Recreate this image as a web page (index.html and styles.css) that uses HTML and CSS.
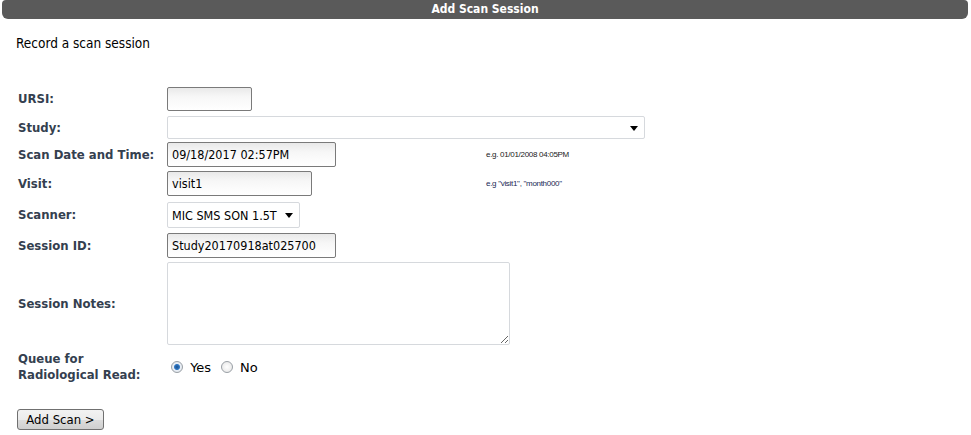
FILE: index.html
```html
<!DOCTYPE html>
<html lang="en">
<head>
    <meta charset="UTF-8">
    <title>Add Scan Session</title>
    <link rel="stylesheet" href="styles.css">
</head>
<body>
    <div class="title-bar">Add Scan Session</div>
    <p class="intro">Record a scan session</p>

    <form class="scan-form">
        <table class="form-table">
            <tr class="ursi-row">
                <td class="label">URSI:</td>
                <td colspan="2"><input type="text" class="field ursi"></td>
            </tr>
            <tr class="study-row">
                <td class="label">Study:</td>
                <td colspan="2">
                    <span class="select-wrap study">
                        <select class="plain-select"><option></option></select>
                    </span>
                </td>
            </tr>
            <tr>
                <td class="label">Scan Date and Time:</td>
                <td class="input-cell"><input type="text" class="field date" value="09/18/2017 02:57PM"></td>
                <td class="hint">e.g. 01/01/2008 04:05PM</td>
            </tr>
            <tr>
                <td class="label">Visit:</td>
                <td class="input-cell"><input type="text" class="field visit" value="visit1"></td>
                <td class="hint blue">e.g "visit1", "month000"</td>
            </tr>
            <tr class="scanner-row">
                <td class="label">Scanner:</td>
                <td colspan="2">
                    <span class="select-wrap scanner">
                        <select class="plain-select"><option>MIC SMS SON 1.5T</option></select>
                    </span>
                </td>
            </tr>
            <tr>
                <td class="label">Session ID:</td>
                <td colspan="2"><input type="text" class="field session" value="Study20170918at025700"></td>
            </tr>
            <tr>
                <td class="label">Session Notes:</td>
                <td colspan="2"><textarea class="notes"></textarea></td>
            </tr>
            <tr class="queue-row">
                <td class="label">Queue for<br>Radiological Read:</td>
                <td colspan="2">
                    <label class="radio"><input type="radio" name="queue" checked> Yes</label>
                    <label class="radio"><input type="radio" name="queue"> No</label>
                </td>
            </tr>
        </table>

        <button type="button" class="add-btn">Add Scan &gt;</button>
    </form>
</body>
</html>
```

FILE: styles.css
```css
body {
    margin: 0;
    padding: 0;
    background: #fff;
    font-family: "DejaVu Sans Condensed", "DejaVu Sans", sans-serif;
    font-size: 13px;
    color: #000;
}
.title-bar {
    margin: 0 3px 0 2px;
    height: 19px;
    line-height: 19px;
    background-color: #5a5a5a;
    border-radius: 4px 4px 6px 6px;
    color: #fff;
    font-weight: bold;
    font-size: 12px;
    text-align: center;
}
.intro {
    margin: 16px 0 0 16px;
    font-size: 13.5px;
}
.scan-form {
    margin: 34px 0 0 16px;
}
.form-table {
    border-collapse: collapse;
}
.form-table td {
    padding: 2px 2px;
    vertical-align: middle;
}
.form-table .ursi-row td {
    padding-bottom: 3px;
}
.form-table .study-row td {
    padding-bottom: 1px;
}
.form-table .scanner-row td {
    padding-top: 4px;
    padding-bottom: 3px;
}
.label {
    width: 145px;
    font-family: "DejaVu Sans Condensed", "DejaVu Sans", sans-serif;
    font-weight: bold;
    font-size: 13px;
    color: #34404f;
    line-height: 16px;
}
.input-cell {
    width: 315px;
}
.field {
    box-sizing: border-box;
    height: 25px;
    padding: 2px 3px 2px 4px;
    border: 1px solid #7a7a7a;
    border-radius: 2px;
    background: linear-gradient(#e9e9e9, #f7f7f7 40%, #fff);
    font-family: "DejaVu Sans Condensed", "DejaVu Sans", sans-serif;
    font-size: 12.5px;
    color: #000;
}
.ursi {
    width: 85px;
    height: 24px;
}
.date,
.session {
    width: 169px;
}
.visit {
    width: 145px;
}
.hint {
    font-family: "Liberation Sans", Arial, sans-serif;
    font-size: 8px;
    letter-spacing: -0.3px;
    color: #222;
}
.hint.blue {
    color: #1a2a55;
}
.select-wrap {
    position: relative;
    display: inline-block;
    vertical-align: middle;
}
.select-wrap::after {
    content: "";
    position: absolute;
    right: 7px;
    top: 50%;
    margin-top: -2px;
    border-left: 4px solid transparent;
    border-right: 4px solid transparent;
    border-top: 5px solid #000;
    pointer-events: none;
}
.plain-select {
    display: block;
    appearance: none;
    -webkit-appearance: none;
    box-sizing: border-box;
    border: 1px solid #d6d9dd;
    border-radius: 2px;
    background: #fff;
    padding: 2px 14px 2px 4px;
    font-family: "DejaVu Sans Condensed", "DejaVu Sans", sans-serif;
    font-size: 12.5px;
    color: #000;
}
.study .plain-select {
    width: 478px;
    height: 23px;
}
.scanner .plain-select {
    width: 133px;
    height: 26px;
}
.notes {
    box-sizing: border-box;
    display: block;
    width: 343px;
    height: 83px;
    border: 1px solid #d6d9dd;
    border-radius: 2px;
    margin: 0;
}
.queue-row td {
    padding-top: 4px;
}
.radio {
    font-family: "DejaVu Sans", Verdana, sans-serif;
    font-size: 13px;
    margin-right: 2px;
}
.radio input {
    appearance: none;
    -webkit-appearance: none;
    width: 12px;
    height: 12px;
    margin: 0 3px 0 4px;
    border: 1px solid #9aa0a6;
    border-radius: 50%;
    background: radial-gradient(circle, #fff, #e3e3e3);
    vertical-align: -1px;
}
.radio input:checked {
    background: radial-gradient(circle, #1b4f8a 0, #2f77c4 2.5px, #e8eef5 3.5px, #dfe3e8);
}
.add-btn {
    margin: 24px 0 0 1px;
    width: 87px;
    height: 21px;
    padding: 0;
    border: 1px solid #707070;
    border-radius: 3px;
    background: linear-gradient(#f2f2f2, #ebebeb 50%, #dddddd 51%, #cfcfcf);
    font-family: "DejaVu Sans Condensed", "DejaVu Sans", sans-serif;
    font-size: 13px;
    color: #000;
}
```
